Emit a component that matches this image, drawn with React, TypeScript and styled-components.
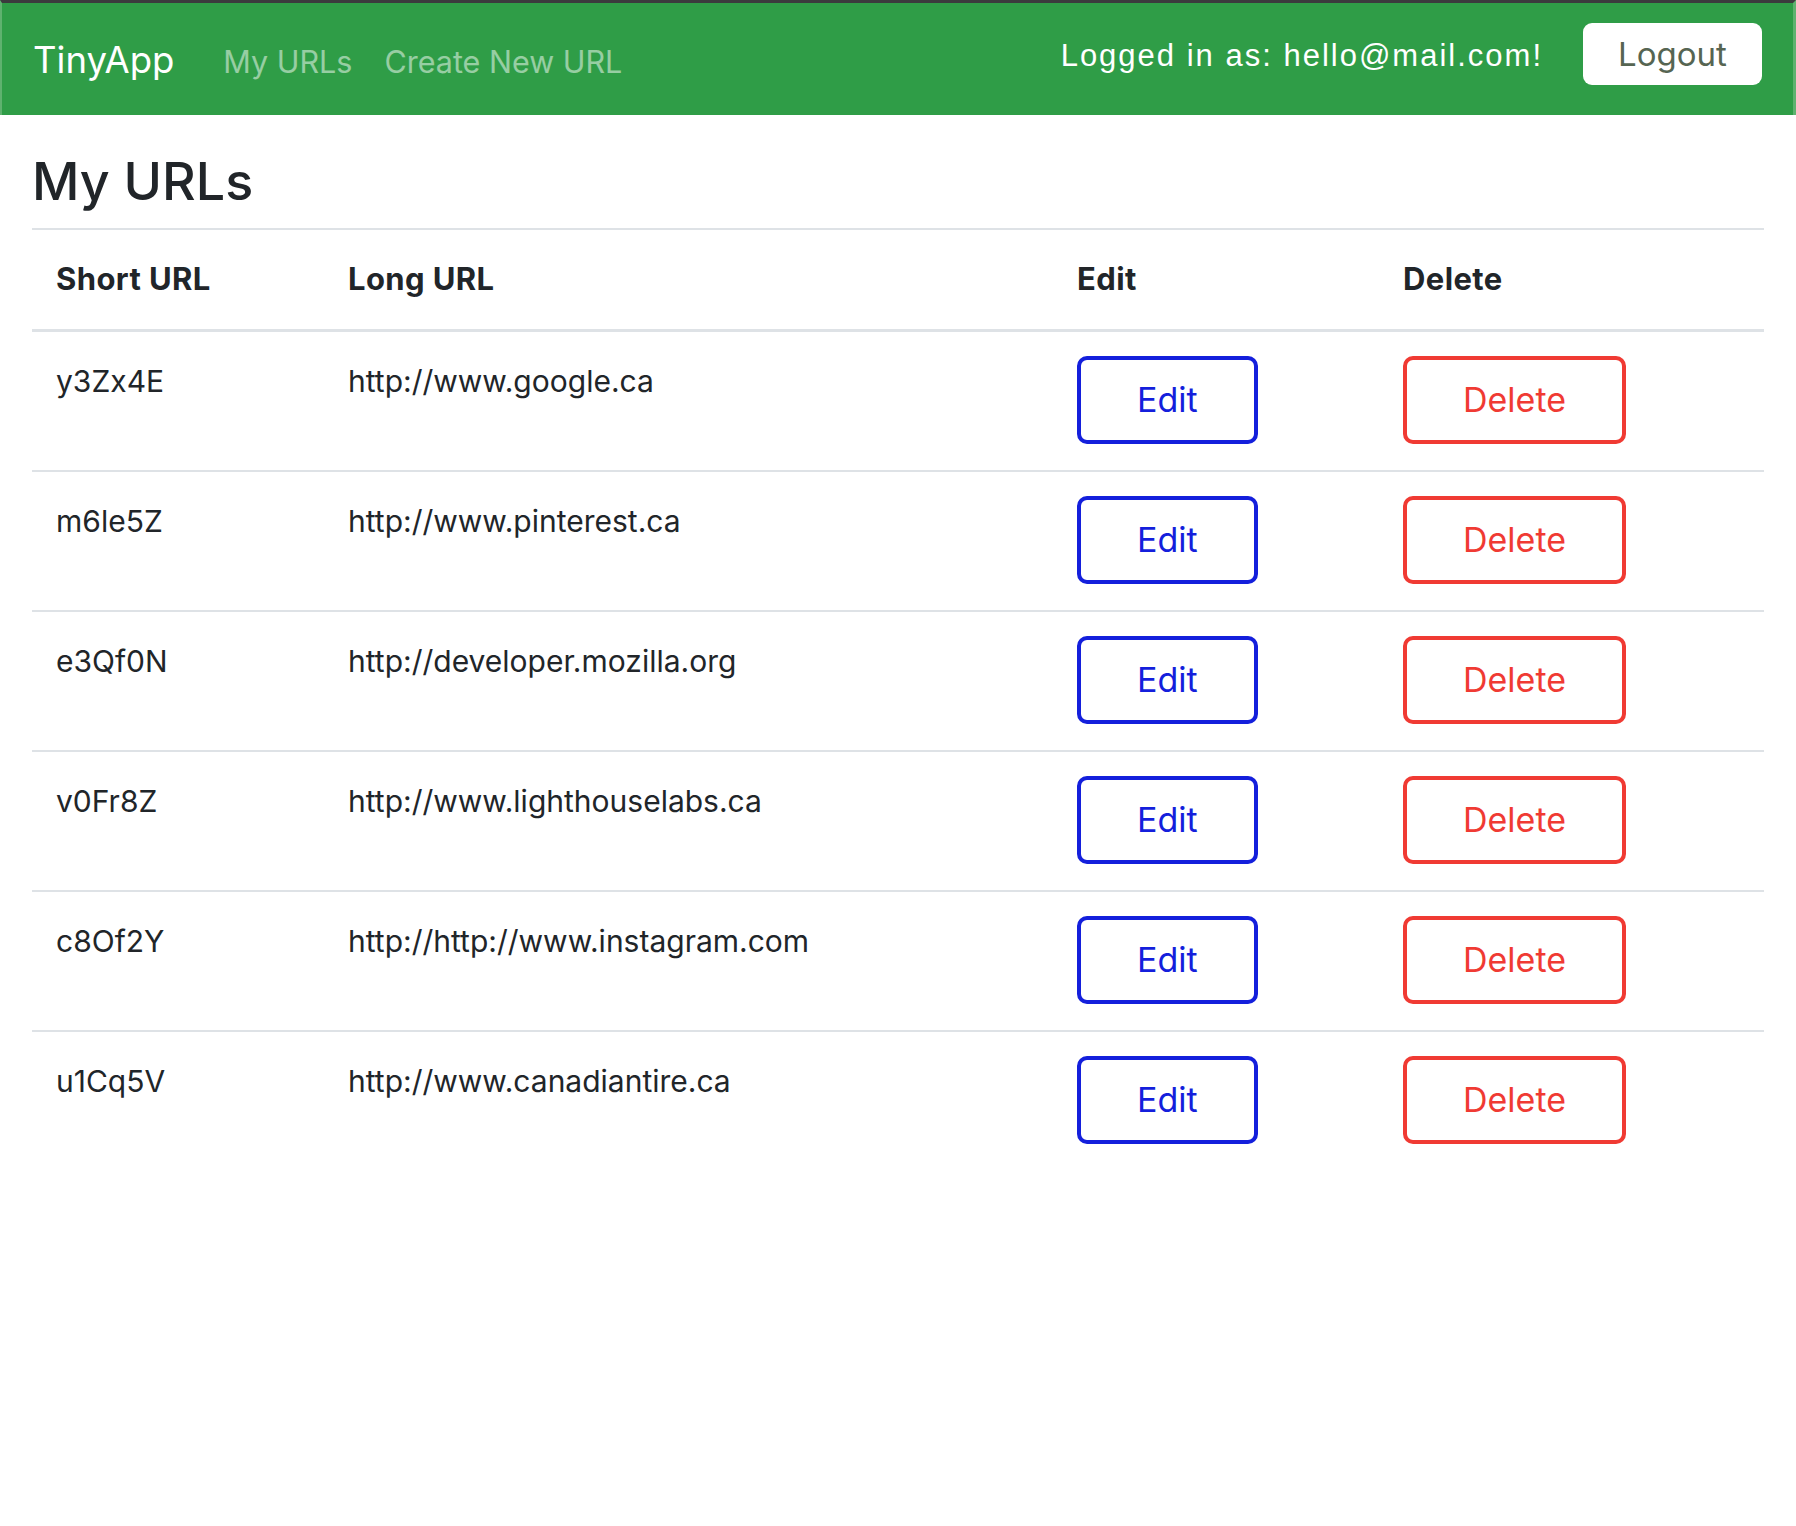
import React from 'react';
import styled, { createGlobalStyle } from 'styled-components';

const GlobalStyle = createGlobalStyle`
  html, body {
    margin: 0;
    padding: 0;
    background: #fff;
  }
  body {
    font-family: Inter, "Noto Sans", sans-serif;
    color: #212529;
  }
`;

const NavBar = styled.nav`
  height: 112px;
  border-top: 3px solid #3b3b3d;
  border-left: 2px solid #5fb26f;
  border-right: 3px solid #5fb26f;
  background: #2f9d47;
  display: flex;
  align-items: center;
  justify-content: space-between;
  padding: 0 31px 0 31px;
`;

const NavLeft = styled.div`
  display: flex;
  align-items: baseline;
  padding-top: 2px;
`;

const Brand = styled.a`
  font-size: 36.5px;
  color: #fff;
  text-decoration: none;
  margin-right: 49px;
`;

const NavLink = styled.a`
  font-size: 30.5px;
  color: rgba(255, 255, 255, 0.5);
  text-decoration: none;
  margin-right: 32px;
`;

const NavRight = styled.div`
  display: flex;
  align-items: center;
  gap: 40px;
  margin-top: -11px;
`;

const LoggedIn = styled.span`
  font-family: "Liberation Sans", Arial, sans-serif;
  font-size: 31px;
  letter-spacing: 2px;
  color: #fff;
  margin-top: 4px;
`;

const LogoutButton = styled.button`
  width: 179px;
  height: 62px;
  border: none;
  border-radius: 9px;
  background: #fff;
  color: #566552;
  font-family: Inter, sans-serif;
  font-size: 33px;
  cursor: pointer;
`;

const Main = styled.main`
  padding: 0 32px;
`;

const Title = styled.h1`
  font-size: 52px;
  font-weight: 500;
  line-height: 1.2;
  margin: 36px 0 15px;
`;

const Table = styled.table`
  width: 100%;
  table-layout: fixed;
  border-collapse: collapse;
  border-top: 2px solid #dee2e6;
  font-size: 30px;
  line-height: 1.5;
`;

const HeadCell = styled.th<{ $w: number }>`
  box-sizing: border-box;
  width: ${(p) => p.$w}px;
  text-align: left;
  font-size: 31px;
  font-weight: 700;
  letter-spacing: 0.4px;
  padding: 26px 24px;
  border-bottom: 3px solid #dee2e6;
`;

const Row = styled.tr`
  border-bottom: 2px solid #dee2e6;
  &:last-child {
    border-bottom: none;
  }
`;

const Cell = styled.td`
  box-sizing: border-box;
  vertical-align: top;
  padding: 24px 24px 26px;
`;

const TextCell = styled(Cell)`
  padding-top: 27px;
`;

const ActionButton = styled.button<{ $tone: 'edit' | 'delete' }>`
  height: 88px;
  padding: 0 56px;
  background: #fff;
  border: 4px solid ${(p) => (p.$tone === 'edit' ? '#141fdc' : '#f03a33')};
  color: ${(p) => (p.$tone === 'edit' ? '#141fdc' : '#f03a33')};
  border-radius: 10px;
  font-family: Inter, sans-serif;
  font-size: 34px;
  cursor: pointer;
`;

const urls = [
  { short: 'y3Zx4E', long: 'http://www.google.ca' },
  { short: 'm6le5Z', long: 'http://www.pinterest.ca' },
  { short: 'e3Qf0N', long: 'http://developer.mozilla.org' },
  { short: 'v0Fr8Z', long: 'http://www.lighthouselabs.ca' },
  { short: 'c8Of2Y', long: 'http://http://www.instagram.com' },
  { short: 'u1Cq5V', long: 'http://www.canadiantire.ca' },
];

function App() {
  return (
    <>
      <GlobalStyle />
      <NavBar>
        <NavLeft>
          <Brand href="#">TinyApp</Brand>
          <NavLink href="#">My URLs</NavLink>
          <NavLink href="#">Create New URL</NavLink>
        </NavLeft>
        <NavRight>
          <LoggedIn>Logged in as: hello@mail.com!</LoggedIn>
          <LogoutButton>Logout</LogoutButton>
        </NavRight>
      </NavBar>
      <Main>
        <Title>My URLs</Title>
        <Table>
          <thead>
            <tr>
              <HeadCell $w={292}>Short URL</HeadCell>
              <HeadCell $w={729}>Long URL</HeadCell>
              <HeadCell $w={326}>Edit</HeadCell>
              <HeadCell $w={385}>Delete</HeadCell>
            </tr>
          </thead>
          <tbody>
            {urls.map((u) => (
              <Row key={u.short}>
                <TextCell>{u.short}</TextCell>
                <TextCell>{u.long}</TextCell>
                <Cell>
                  <ActionButton $tone="edit">Edit</ActionButton>
                </Cell>
                <Cell>
                  <ActionButton $tone="delete">Delete</ActionButton>
                </Cell>
              </Row>
            ))}
          </tbody>
        </Table>
      </Main>
    </>
  );
}

export default App;
